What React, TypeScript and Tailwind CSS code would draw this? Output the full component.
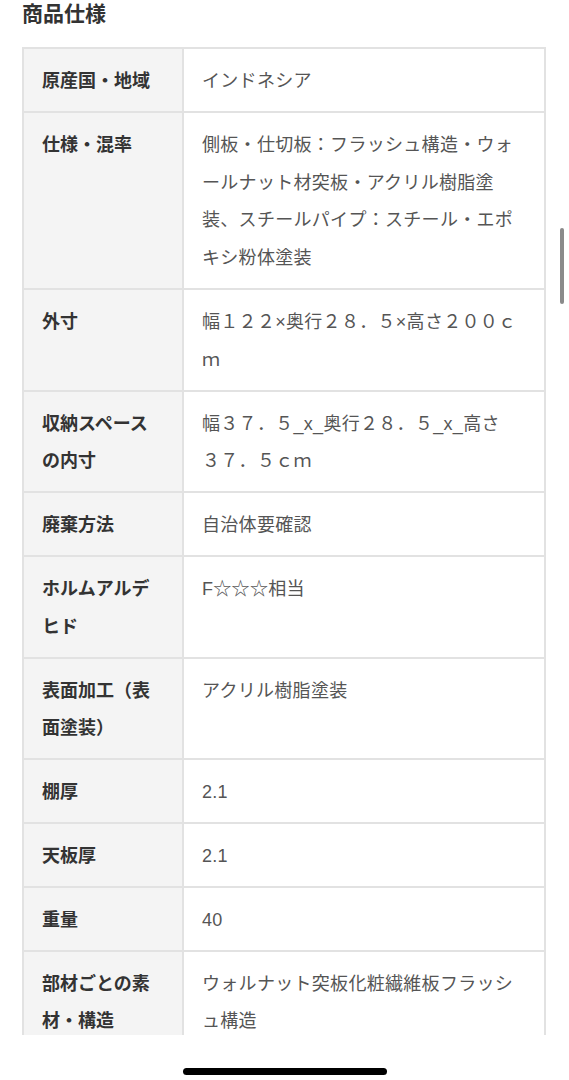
const specs: { label: string; value: React.ReactNode }[] = [
  { label: '原産国・地域', value: 'インドネシア' },
  {
    label: '仕様・混率',
    value: (
      <>
        側板・仕切板：フラッシュ構造・ウォ
        <br />
        ールナット材突板・アクリル樹脂塗
        <br />
        装、スチールパイプ：スチール・エポ
        <br />
        キシ粉体塗装
      </>
    ),
  },
  {
    label: '外寸',
    value: (
      <>
        幅１２２×奥行２８．５×高さ２００ｃ
        <br />
        ｍ
      </>
    ),
  },
  {
    label: '収納スペースの内寸',
    value: (
      <>
        幅３７．５_x_奥行２８．５_x_高さ
        <br />
        ３７．５ｃｍ
      </>
    ),
  },
  { label: '廃棄方法', value: '自治体要確認' },
  { label: 'ホルムアルデヒド', value: 'F☆☆☆相当' },
  { label: '表面加工（表面塗装）', value: 'アクリル樹脂塗装' },
  { label: '棚厚', value: '2.1' },
  { label: '天板厚', value: '2.1' },
  { label: '重量', value: '40' },
  {
    label: '部材ごとの素材・構造',
    value: (
      <>
        ウォルナット突板化粧繊維板フラッシ
        <br />
        ュ構造
      </>
    ),
  },
]

export default function App() {
  return (
    <div className="relative flex h-[1080px] flex-col overflow-hidden bg-white font-['Liberation_Sans','Noto_Sans_CJK_JP',sans-serif]">
      <div className="h-[1035px] overflow-hidden px-[22px] pr-[23px]">
        <h2 className="text-[21px] leading-[28px] font-bold text-[#333]">商品仕様</h2>

        <table className="mt-[19px] w-full border-collapse border-2 border-[#e2e2e2]">
          <tbody>
            {specs.map((row) => (
              <tr key={row.label} className="border-b-2 border-[#e2e2e2]">
                <th className="w-[160px] border-r-2 border-[#e2e2e2] bg-[#f4f4f4] px-[18px] pt-[14px] pb-[10px] text-left align-top text-[18px] leading-[37.8px] font-bold text-[#333]">
                  {row.label}
                </th>
                <td className="px-[18px] pt-[14px] pb-[10px] align-top text-[18px] leading-[37.8px] tracking-[0.3px] whitespace-nowrap text-[#555]">
                  {row.value}
                </td>
              </tr>
            ))}
          </tbody>
        </table>
      </div>

      {/* home indicator */}
      <div className="flex flex-1 items-end justify-center pb-[5px]">
        <div className="h-[7px] w-[204px] rounded-full bg-black" />
      </div>

      {/* scroll indicator */}
      <div className="absolute top-[228px] right-[5px] h-[76px] w-[4px] rounded-full bg-[#8a8a8a]" />
    </div>
  )
}
